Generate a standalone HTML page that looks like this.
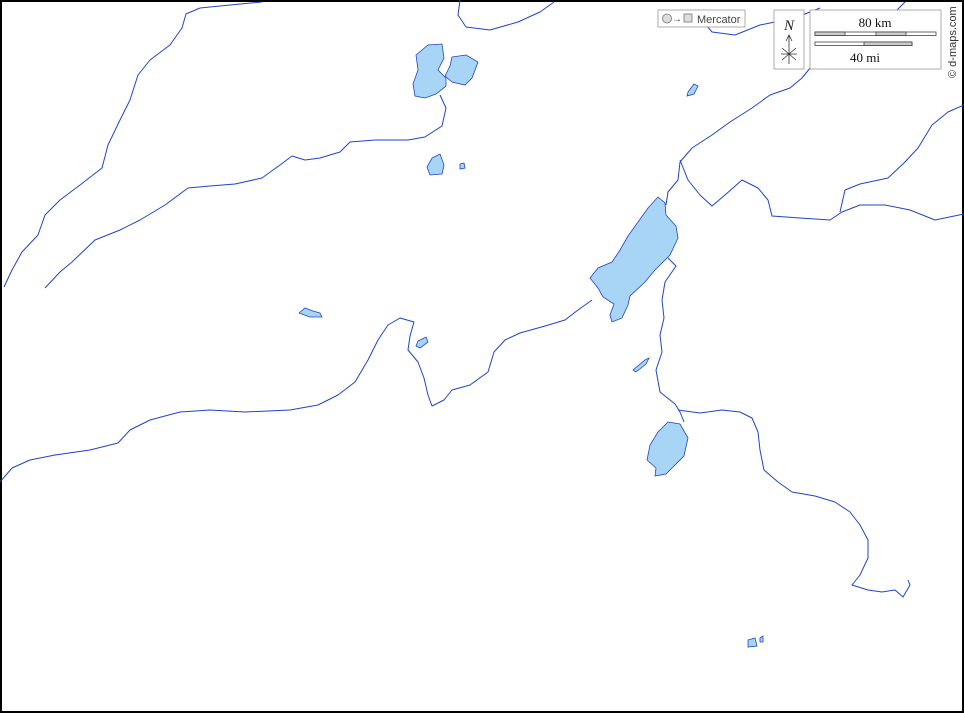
<!DOCTYPE html>
<html><head><style>
html,body{margin:0;padding:0;background:#fff}
svg{display:block}
.s{font-family:"Liberation Serif",serif}
.a{font-family:"Liberation Sans",sans-serif}
</style></head><body>
<svg width="964" height="713" viewBox="0 0 964 713" xmlns="http://www.w3.org/2000/svg">
<rect x="1" y="1" width="962" height="711" fill="#fff" stroke="#000" stroke-width="2"/>
<g fill="none" stroke="#1f45c8" stroke-width="1" stroke-linejoin="round">
<path d="M262,2 L230,5 L200,8 L186,14 L182,28 L170,45 L150,60 L138,75 L130,100 L120,120 L108,145 L102,168 L80,185 L60,200 L45,215 L38,235 L22,252 L12,270 L4,287"/>
<path d="M45,288 L60,272 L72,262 L95,240 L120,230 L140,220 L165,205 L188,188 L210,186 L235,184 L262,178 L280,165 L292,156 L305,160 L320,158 L340,152 L350,142 L375,140 L408,140 L425,137 L442,126 L446,108 L440,95"/>
<path d="M0,482 L12,468 L30,460 L55,455 L90,450 L118,443 L130,430 L150,420 L180,412 L210,410 L245,412 L290,410 L318,405 L338,395 L355,382 L368,360 L378,340 L388,325 L400,318 L414,322 L410,336 L408,350 L418,362 L424,378 L428,395 L432,406 L444,400 L452,390 L470,385 L488,372 L494,352 L505,340 L520,333 L545,326 L565,320 L578,310 L592,300"/>
<path d="M680,162 L692,148 L712,135 L730,122 L752,108 L770,95 L790,88 L802,78 L815,62 L828,50 L845,40 L862,30 L878,22 L895,12 L905,2"/>
<path d="M680,160 L688,180 L700,195 L712,206 L725,195 L742,180 L758,188 L768,200 L772,216 L800,218 L830,220 L842,212 L860,205 L885,205 L910,210 L935,220 L964,214"/>
<path d="M840,212 L845,190 L860,184 L888,178 L905,162 L918,148 L932,125 L948,112 L964,105"/>
<path d="M680,162 L678,180 L668,192 L666,205"/>
<path d="M668,258 L676,266 L665,282 L662,300 L664,318 L660,335 L662,352 L656,370 L660,392 L675,404 L680,412 L684,422"/>
<path d="M678,410 L700,413 L722,410 L740,412 L752,418 L758,432 L760,450 L764,470 L778,482 L792,492 L815,496 L835,502 L850,512 L860,525 L868,540 L868,558 L860,575 L852,585 L868,590 L882,592 L895,590 L903,597 L910,585 L908,580"/>
<path d="M460,0 L458,15 L466,27 L490,30 L518,22 L540,12 L554,2"/>
<path d="M700,18 L712,32 L735,35 L760,25 L775,22 L790,20 L820,8"/>
</g>
<g fill="#a8d4f6" stroke="#1f45c8" stroke-width="0.8">
<path d="M428,45 L442,44 L444,58 L438,70 L446,78 L446,86 L436,94 L425,98 L415,96 L413,84 L418,70 L416,55 Z"/>
<path d="M452,57 L466,55 L478,62 L472,78 L465,85 L452,82 L445,76 L450,66 Z"/>
<path d="M432,158 L440,154 L444,165 L442,174 L430,175 L427,167 Z"/>
<path d="M460,164 L464,163 L465,168 L460,169 Z"/>
<path d="M299,313 L305,308 L313,311 L320,313 L322,317 L310,317 Z"/>
<path d="M418,341 L426,337 L428,342 L420,348 L416,346 Z"/>
<path d="M658,197 L665,203 L666,215 L676,226 L678,238 L670,255 L655,270 L645,282 L630,296 L628,305 L622,318 L612,322 L610,315 L614,304 L603,297 L598,288 L590,278 L598,268 L612,262 L620,250 L628,236 L638,222 L648,208 Z"/>
<path d="M633,370 L645,360 L649,358 L646,364 L636,372 Z"/>
<path d="M668,422 L680,424 L688,438 L684,456 L674,466 L666,474 L655,476 L656,468 L647,460 L650,445 L658,432 Z"/>
<path d="M688,92 L694,84 L698,86 L694,94 L687,96 Z"/>
<path d="M748,640 L755,638 L757,646 L748,647 Z"/>
<path d="M760,638 L763,636 L763,642 L760,642 Z"/>
</g>
<rect x="658" y="10" width="87" height="17" fill="#fff" stroke="#999" stroke-width="0.8"/>
<circle cx="667" cy="18.5" r="4.5" fill="#ddd" stroke="#777" stroke-width="0.8"/>
<text class="a" x="672" y="22" font-size="10" fill="#444">→</text>
<rect x="684" y="14" width="8" height="8" fill="#ddd" stroke="#777" stroke-width="0.8"/>
<text class="a" x="697" y="23" font-size="11" fill="#444">Mercator</text>
<rect x="774" y="10" width="30" height="59" fill="#fff" stroke="#999" stroke-width="0.8"/>
<text class="s" x="789" y="30" text-anchor="middle" font-size="15" font-style="italic" fill="#222">N</text>
<path d="M789,64 L789,36 M786,41 L789,35 L792,41 M782,48 L796,60 M796,48 L782,60 M781,54 L797,54" stroke="#333" stroke-width="0.8" fill="none"/>
<rect x="810" y="10" width="131" height="59" fill="#fff" stroke="#999" stroke-width="0.8"/>
<text class="s" x="875" y="27" text-anchor="middle" font-size="13" fill="#111">80 km</text>
<rect x="815" y="32" width="121" height="3.5" fill="#fff" stroke="#444" stroke-width="0.8"/>
<rect x="815" y="32" width="30" height="3.5" fill="#ccc" stroke="#444" stroke-width="0.8"/>
<rect x="876" y="32" width="30" height="3.5" fill="#ccc" stroke="#444" stroke-width="0.8"/>
<rect x="815" y="42" width="97" height="3.5" fill="#fff" stroke="#444" stroke-width="0.8"/>
<rect x="864" y="42" width="48" height="3.5" fill="#ccc" stroke="#444" stroke-width="0.8"/>
<text class="s" x="865" y="62" text-anchor="middle" font-size="13" fill="#111">40 mi</text>
<text class="a" transform="translate(956,78) rotate(-90)" font-size="11" fill="#333">© d-maps.com</text>
</svg>
</body></html>
